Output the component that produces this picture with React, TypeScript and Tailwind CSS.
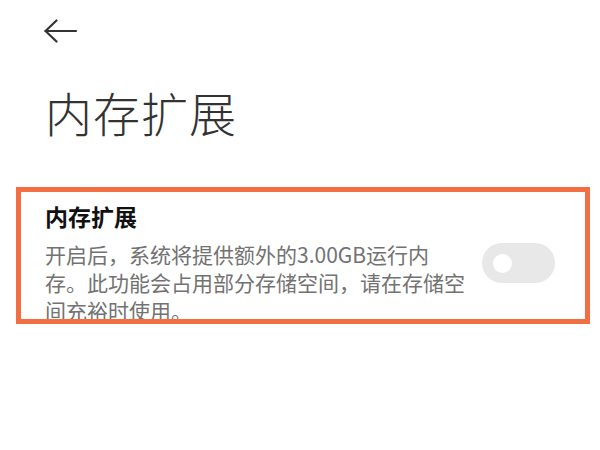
import React from 'react';

export default function App() {
  return (
    <div className="w-[600px] h-[450px] bg-white overflow-hidden font-['Noto_Sans_CJK_SC',sans-serif]">
      {/* Back arrow */}
      <div className="pt-[19px] pl-[43px]">
        <svg width="35" height="24" viewBox="0 0 35 24" fill="none" stroke="#333" strokeWidth="2.2" strokeLinecap="round" strokeLinejoin="round">
          <path d="M2.5 12H33" />
          <path d="M13.5 1.5L2.5 12L13.5 22.5" />
        </svg>
      </div>

      {/* Page title */}
      <h1 className="mt-[45px] pl-[45px] text-[47px] leading-none font-light tracking-[1px] text-[#333]">内存扩展</h1>

      {/* Setting card */}
      <div className="mt-[52px] ml-[16px] w-[574px] h-[137px] border-[5px] border-[#f26f43] overflow-hidden flex items-start pl-[24px] pr-[30px]">
        <div className="w-[425px] pt-[13px]">
          <div className="text-[23px] leading-none font-bold text-[#111]">内存扩展</div>
          <p className="mt-[12px] text-[21px] leading-[28px] text-[#727272]">
            开启后，系统将提供额外的3.00GB运行内存。此功能会占用部分存储空间，请在存储空间充裕时使用。
          </p>
        </div>
        <div className="ml-auto mt-[51px] w-[73px] h-[40px] rounded-full bg-[#e8e8e8] flex items-center pl-[11px]">
          <div className="w-[19px] h-[19px] rounded-full bg-white" />
        </div>
      </div>
    </div>
  );
}
